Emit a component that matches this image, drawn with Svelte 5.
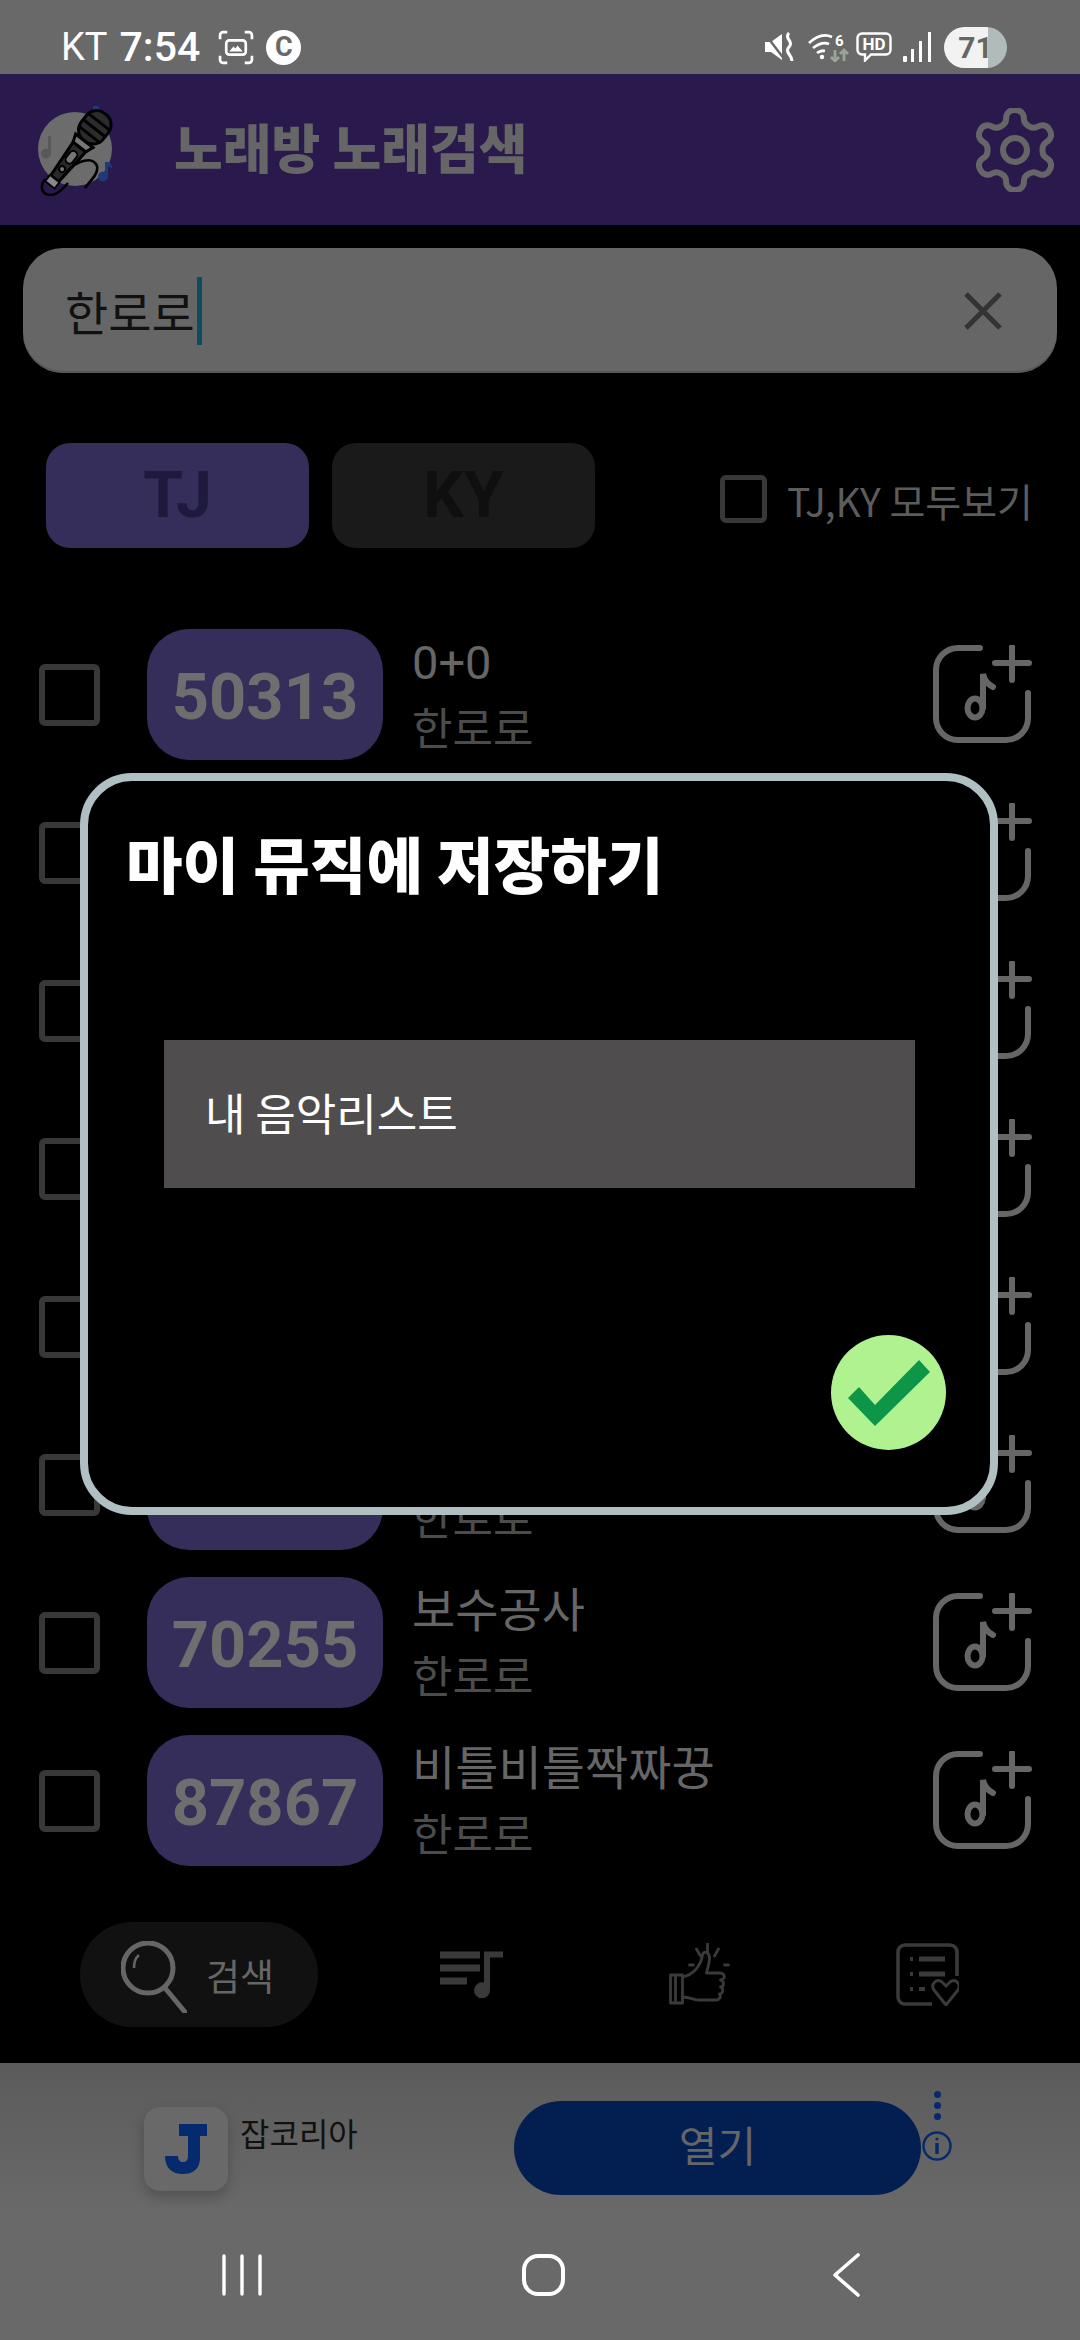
<script lang="ts">
  const rows = [
    { no: "50313", title: "0+0", artist: "한로로" },
    { no: "", title: "", artist: "" },
    { no: "", title: "", artist: "" },
    { no: "", title: "", artist: "" },
    { no: "", title: "", artist: "" },
    { no: "", title: "", artist: "한로로" },
    { no: "70255", title: "보수공사", artist: "한로로" },
    { no: "87867", title: "비틀비틀짝짜꿍", artist: "한로로" },
  ];
</script>

<div class="page">
  <div class="status">
    <span class="carrier">KT</span>
    <span class="clock">7:54</span>
    <svg class="st-shot" viewBox="0 0 35 34" fill="none" stroke="#fff" stroke-width="2.6">
      <path d="M2 9V5a3 3 0 0 1 3-3h4M26 2h4a3 3 0 0 1 3 3v4M33 25v4a3 3 0 0 1-3 3h-4M9 32H5a3 3 0 0 1-3-3v-4" />
      <rect x="8" y="10" width="19" height="14" rx="3" />
      <path d="M11 21l4-5 2 2 2-3 5 6z" fill="#fff" stroke="none" />
    </svg>
    <span class="st-badge">C</span>
    <div class="st-right">
      <svg class="st-mute" viewBox="0 0 30 30" fill="#fff">
        <path d="M0 10h6l11-8v26L6 20H0z" />
        <path d="M0 2l20 26" stroke="#696969" stroke-width="2.5" />
        <path d="M24 1q-3 3 0 7t0 7 0 7 3 7" fill="none" stroke="#fff" stroke-width="3" />
      </svg>
      <svg class="st-wifi" viewBox="0 0 41 30" fill="none" stroke="#fff" stroke-width="2.8">
        <path d="M1 11q12-11 23-6M5 16q9-7 16-4M9 21q4-3 8-2" />
        <circle cx="14" cy="25" r="2.2" fill="#fff" stroke="none" />
        <path d="M27 18v11M23 25l4 4 4-4" stroke="#9aa59a" />
        <path d="M36 29V18M32 22l4-4 4 4" stroke="#9aa59a" />
        <text x="27" y="14" class="wifi-six">6</text>
      </svg>
      <svg class="st-hd" viewBox="0 0 36 30" fill="none" stroke="#fff" stroke-width="2.4">
        <path d="M6 1.5h24a4.5 4.5 0 0 1 4.5 4.5v12a4.5 4.5 0 0 1-4.5 4.5H15l-6 6v-6H6A4.5 4.5 0 0 1 1.5 18V6A4.5 4.5 0 0 1 6 1.5z" />
        <text x="18" y="18" class="hd-text">HD</text>
      </svg>
      <svg class="st-signal" viewBox="0 0 29 30" fill="#fff">
        <rect x="0" y="24" width="4" height="6" rx="1" />
        <rect x="8" y="17" width="3" height="13" />
        <rect x="16" y="9" width="3" height="21" />
        <rect x="25" y="0" width="3" height="30" />
      </svg>
      <div class="st-battery"><span>71</span></div>
    </div>
  </div>

  <header class="topbar">
    <svg class="logo" viewBox="0 0 80 90">
      <circle cx="39" cy="43" r="37" fill="#6c6c6c" />
      <path d="M60 2l3 6-5-3v13a5 5 0 1 1-3-4V2z" fill="#1f3a7a" transform="translate(2 -2)" />
      <path d="M15 30v17a5 5 0 1 1-3-4V30z" fill="#595959" />
      <path d="M74 52l3 7-5-3v10a5 5 0 1 1-3-4V52z" fill="#1f3a7a" transform="translate(0 4)" />
      <g transform="rotate(38 52 30)">
        <rect x="38" y="2" width="28" height="34" rx="13" fill="#2c2c2c" stroke="#000" stroke-width="3" />
        <path d="M39 12h26M38 20h28M39 28h26" stroke="#000" stroke-width="3" />
        <path d="M41 36h22l-3 8H44z" fill="#777" stroke="#000" stroke-width="3" />
        <path d="M44 44h16l-3 40H47z" fill="#2a2a2a" stroke="#000" stroke-width="3" />
        <rect x="48" y="50" width="8" height="14" rx="4" fill="#777" stroke="#000" stroke-width="2" />
        <circle cx="52" cy="72" r="3" fill="#777" stroke="#000" stroke-width="2" />
        <rect x="46" y="84" width="12" height="8" fill="#888" stroke="#000" stroke-width="2" />
      </g>
      <path d="M9 73c-6 8-3 16 6 16 6 0 12-6 17-12M31 66c10-12 26-16 30-6 2 8-8 16-12 22" fill="none" stroke="#000" stroke-width="2.6" />
    </svg>
    <span class="app-title">노래방 노래검색</span>
    <svg class="gear" viewBox="2 2 20 20" fill="none" stroke="#666" stroke-width="1.5" stroke-linecap="round" stroke-linejoin="round">
      <path d="M12.22 2h-.44a2 2 0 0 0-2 2v.18a2 2 0 0 1-1 1.73l-.43.25a2 2 0 0 1-2 0l-.15-.08a2 2 0 0 0-2.73.73l-.22.38a2 2 0 0 0 .73 2.73l.15.1a2 2 0 0 1 1 1.72v.51a2 2 0 0 1-1 1.74l-.15.09a2 2 0 0 0-.73 2.73l.22.38a2 2 0 0 0 2.73.73l.15-.08a2 2 0 0 1 2 0l.43.25a2 2 0 0 1 1 1.73V20a2 2 0 0 0 2 2h.44a2 2 0 0 0 2-2v-.18a2 2 0 0 1 1-1.73l.43-.25a2 2 0 0 1 2 0l.15.08a2 2 0 0 0 2.73-.73l.22-.39a2 2 0 0 0-.73-2.73l-.15-.08a2 2 0 0 1-1-1.74v-.5a2 2 0 0 1 1-1.74l.15-.09a2 2 0 0 0 .73-2.73l-.22-.38a2 2 0 0 0-2.73-.73l-.15.08a2 2 0 0 1-2 0l-.43-.25a2 2 0 0 1-1-1.73V4a2 2 0 0 0-2-2z" />
      <circle cx="12" cy="12" r="3" />
    </svg>
  </header>

  <div class="search">
    <span class="query">한로로</span>
    <span class="caret"></span>
    <svg class="clear" viewBox="0 0 38 38" stroke="#333" stroke-width="5">
      <path d="M2 2l34 34M36 2L2 36" />
    </svg>
  </div>

  <div class="tabs">
    <div class="tab tj">TJ</div>
    <div class="tab ky">KY</div>
    <span class="box small"></span>
    <span class="all-label">TJ,KY 모두보기</span>
  </div>

  <div class="list">
    {#each rows as row}
      <div class="row">
        <span class="box"></span>
        <div class="pill">{row.no}</div>
        <div class="song">
          <div class="song-title">{row.title}</div>
          <div class="song-artist">{row.artist}</div>
        </div>
        <svg class="add" viewBox="0 0 100 100" fill="none" stroke="#666" stroke-width="6" stroke-linecap="round">
          <path d="M48 3H26A22 22 0 0 0 4 25V73A22 22 0 0 0 26 95H74A22 22 0 0 0 96 73V48" />
          <path d="M80 2V35M63 18H97" />
          <ellipse cx="43" cy="63" rx="7.5" ry="9.5" />
          <path d="M51 63V29q2 9 10 13" />
        </svg>
      </div>
    {/each}
  </div>

  <nav class="tabbar">
    <div class="nav-active">
      <svg class="nav-search" viewBox="0 0 66 72" fill="none" stroke="#666" stroke-width="5">
        <circle cx="27" cy="27" r="25" />
        <path d="M44 47l20 24" stroke-linecap="round" />
        <path d="M13 27q0-9 5-13" stroke-width="2.5" />
      </svg>
      <span>검색</span>
    </div>
    <div class="nav-icons">
      <svg viewBox="0 0 63 46" fill="#3a3a3a">
        <rect x="0" y="0" width="40" height="7" />
        <rect x="0" y="13" width="40" height="7" />
        <rect x="0" y="26" width="27" height="7" />
        <path d="M44 0h19v6H50v32a8 8 0 1 1-6-7z" />
      </svg>
      <svg viewBox="0 0 62 63" fill="none" stroke="#3a3a3a" stroke-width="2.8" stroke-linejoin="round">
        <path d="M2 32h12v28H2zM7 32v28" />
        <path d="M14 34c10-2 18-10 20-22 1-5 7-3 7 3 0 6-2 10-3 15h14c5 0 5 7 0 7 4 0 4 7 0 7 3 0 3 7-1 7 2 3 0 6-4 6H30c-6 0-8-3-16-3" />
        <path d="M39 0v9M28 6l4 7M50 6l-4 7M21 22h4M56 22h4" stroke-linecap="round" />
      </svg>
      <svg viewBox="0 0 63 63" fill="none" stroke="#3a3a3a" stroke-width="3.6">
        <path d="M36 61H9a7 7 0 0 1-7-7V9a7 7 0 0 1 7-7h45a7 7 0 0 1 7 7v24" />
        <path d="M14 16h3M14 31h3M14 46h3" stroke-width="4" />
        <path d="M23 16h26M23 31h26" stroke-width="5" />
        <path d="M23 46h6" stroke-width="4" />
        <path d="M50 62L38 47c-4-6 3-12 8-8l4 4 4-4c5-4 12 2 8 8z" stroke-width="3" />
      </svg>
    </div>
  </nav>

  <div class="ad">
    <div class="ad-icon">
      <svg viewBox="0 0 42 50" fill="#062a6e">
        <path d="M14 0h28v12H35v22c0 10-6 16-17 16S0 44 0 32h13c0 4 2 6 5 6s5-2 5-6V12h-9z" />
      </svg>
    </div>
    <span class="ad-name">잡코리아</span>
    <div class="ad-btn">열기</div>
    <div class="ad-side">
      <div class="dots"><i></i><i></i><i></i></div>
      <svg viewBox="0 0 30 30" fill="none" stroke="#062a6e" stroke-width="2.4">
        <circle cx="15" cy="15" r="13.5" />
        <path d="M15 12v11" stroke-width="3.5" />
        <circle cx="15" cy="8" r="1.6" fill="#062a6e" stroke="none" />
      </svg>
    </div>
  </div>

  <div class="sysnav">
    <svg class="sys-recent" viewBox="0 0 40 42" stroke="#fff" stroke-width="3.4" stroke-linecap="round">
      <path d="M2 2v38M20 2v38M38 2v38" />
    </svg>
    <svg class="sys-home" viewBox="0 0 43 42" fill="none" stroke="#fff" stroke-width="4">
      <rect x="2" y="2" width="39" height="38" rx="14" />
    </svg>
    <svg class="sys-back" viewBox="0 0 27 44" fill="none" stroke="#fff" stroke-width="3.6" stroke-linecap="round" stroke-linejoin="round">
      <path d="M25 2L2 22l23 20" />
    </svg>
  </div>

  <div class="dialog">
    <h2>마이 뮤직에 저장하기</h2>
    <div class="playlist">내 음악리스트</div>
    <div class="confirm">
      <svg viewBox="0 0 82 66" fill="#0d9648">
        <path d="M0 38l11-11 16 18L71 0l11 12-55 54z" />
      </svg>
    </div>
  </div>
</div>

<style>
  :global(body) {
    margin: 0;
    background: #000;
  }
  .page {
    position: relative;
    width: 1080px;
    height: 2340px;
    overflow: hidden;
    background: #000;
    color: #666;
    font-family: "Noto Sans CJK KR", Roboto, sans-serif;
    display: flex;
    flex-direction: column;
  }

  .status {
    height: 74px;
    flex: none;
    box-sizing: border-box;
    padding: 20px 73px 0 61px;
    background: #696969;
    color: #fff;
    display: flex;
    align-items: center;
    font-family: Roboto, sans-serif;
    font-size: 38px;
    line-height: 54px;
  }
  .clock {
    margin-left: 12px;
    font-size: 41px;
    font-weight: 500;
  }
  .st-shot {
    width: 36px;
    height: 35px;
    margin-left: 18px;
  }
  .st-badge {
    width: 35px;
    height: 35px;
    margin-left: 12px;
    border-radius: 50%;
    background: #fff;
    color: #696969;
    font-size: 27px;
    font-weight: 700;
    line-height: 35px;
    text-align: center;
  }
  .st-right {
    margin-left: auto;
    display: flex;
    align-items: center;
  }
  .st-mute {
    width: 30px;
    height: 30px;
  }
  .st-wifi {
    width: 41px;
    height: 30px;
    margin-left: 13px;
  }
  .wifi-six {
    font: 700 15px Roboto, sans-serif;
    fill: #fff;
    stroke: none;
  }
  .st-hd {
    width: 36px;
    height: 30px;
    margin-left: 7px;
  }
  .hd-text {
    font: 700 17px Roboto, sans-serif;
    fill: #fff;
    stroke: none;
    text-anchor: middle;
  }
  .st-signal {
    width: 29px;
    height: 30px;
    margin-left: 11px;
  }
  .st-battery {
    width: 63px;
    height: 41px;
    margin-left: 12px;
    border-radius: 21px;
    background: linear-gradient(90deg, #f2f2f2 0 44px, #b0bcbc 44px);
    color: #666;
    font-size: 30px;
    font-weight: 700;
    line-height: 41px;
    text-align: center;
  }

  .topbar {
    height: 151px;
    flex: none;
    background: #29194d;
    display: flex;
    align-items: center;
    padding: 0 25px 0 36px;
  }
  .logo {
    width: 80px;
    height: 90px;
    margin-top: 2px;
  }
  .app-title {
    margin-left: 58px;
    font-size: 53px;
    font-weight: 900;
    line-height: 60px;
    margin-top: -8px;
  }
  .gear {
    width: 80px;
    height: 84px;
    margin-left: auto;
  }

  .search {
    height: 125px;
    flex: none;
    margin: 23px 23px 0;
    padding: 0 55px 0 42px;
    border-radius: 40px;
    background: #666;
    box-shadow: inset 0 -2px 0 #575757;
    display: flex;
    align-items: center;
    color: #111;
  }
  .query {
    font-size: 47px;
    line-height: 60px;
  }
  .caret {
    width: 5px;
    height: 68px;
    margin-left: 2px;
    background: #0d4d5e;
  }
  .clear {
    width: 38px;
    height: 38px;
    margin-left: auto;
  }

  .tabs {
    height: 105px;
    flex: none;
    margin-top: 70px;
    padding: 0 47px 0 46px;
    display: flex;
    align-items: center;
  }
  .tab {
    width: 263px;
    height: 105px;
    border-radius: 24px;
    font-family: Roboto, sans-serif;
    font-size: 64px;
    font-weight: 700;
    line-height: 105px;
    text-align: center;
  }
  .tj {
    background: #352d5a;
    color: #1e1a3e;
  }
  .ky {
    margin-left: 23px;
    background: #1a1a1a;
    color: #0f0f0f;
  }
  .box {
    flex: none;
    width: 61px;
    height: 62px;
    box-sizing: border-box;
    border: 6px solid #383838;
    border-radius: 6px;
  }
  .box.small {
    width: 47px;
    height: 48px;
    margin-left: auto;
    border-width: 5px;
    margin-top: 6px;
  }
  .all-label {
    margin-left: 20px;
    margin-top: 8px;
    font-size: 39px;
    line-height: 48px;
    color: #5c5c5c;
  }

  .list {
    margin-top: 81px;
    padding: 0 48px 0 39px;
    display: flex;
    flex-direction: column;
    gap: 27px;
  }
  .row {
    height: 131px;
    display: flex;
    align-items: center;
  }
  .pill {
    flex: none;
    width: 236px;
    height: 131px;
    margin-left: 47px;
    border-radius: 42px;
    background: #352d5a;
    color: #6e6e6e;
    font-family: Roboto, sans-serif;
    font-size: 65px;
    font-weight: 700;
    line-height: 137px;
    text-align: center;
  }
  .song {
    margin-left: 29px;
  }
  .song-title {
    height: 60px;
    font-family: Roboto, "Noto Sans CJK KR", sans-serif;
    font-size: 47px;
    line-height: 60px;
  }
  .song-artist {
    height: 60px;
    margin-top: 3px;
    font-size: 44px;
    line-height: 60px;
    color: #4c4c4c;
  }
  .add {
    flex: none;
    width: 100px;
    height: 100px;
    margin-left: auto;
  }

  .tabbar {
    height: 105px;
    flex: none;
    margin-top: 56px;
    padding-left: 80px;
    display: flex;
    align-items: center;
  }
  .nav-active {
    width: 238px;
    height: 105px;
    box-sizing: border-box;
    padding-left: 41px;
    border-radius: 52px;
    background: #111;
    display: flex;
    align-items: center;
    gap: 19px;
    font-size: 37px;
  }
  .nav-search {
    width: 66px;
    height: 72px;
    margin-top: 4px;
  }
  .nav-icons {
    margin-left: 122px;
    display: flex;
    align-items: center;
    gap: 165px;
  }
  .nav-icons svg {
    width: 63px;
    height: 63px;
  }

  .ad {
    height: 147px;
    flex: none;
    margin-top: 36px;
    box-sizing: border-box;
    padding: 38px 0 0 144px;
    background: linear-gradient(#5b5b5b, #696969);
    display: flex;
    align-items: flex-start;
  }
  .ad-icon {
    width: 84px;
    height: 84px;
    margin-top: 6px;
    border-radius: 16px;
    background: #696969;
    box-shadow: 0 6px 14px rgba(0, 0, 0, 0.22);
    display: flex;
    align-items: center;
    justify-content: center;
  }
  .ad-icon svg {
    width: 42px;
    height: 50px;
  }
  .ad-name {
    width: 120px;
    margin: 10px 0 0 12px;
    font-size: 32px;
    line-height: 42px;
    color: #111;
    white-space: nowrap;
  }
  .ad-btn {
    width: 407px;
    height: 94px;
    margin-left: 154px;
    border-radius: 47px;
    background: #031f52;
    font-size: 42px;
    line-height: 86px;
    text-align: center;
  }
  .ad-side {
    width: 32px;
    margin: -10px 0 0 0;
    display: flex;
    flex-direction: column;
    align-items: center;
    gap: 11px;
  }
  .ad-side svg {
    width: 30px;
    height: 30px;
  }
  .dots {
    display: flex;
    flex-direction: column;
    gap: 4px;
  }
  .dots i {
    display: block;
    width: 7px;
    height: 7px;
    border-radius: 50%;
    background: #062a6e;
  }

  .sysnav {
    flex: 1;
    background: #696969;
    padding-left: 222px;
    display: flex;
    align-items: center;
  }
  .sys-recent {
    width: 40px;
    height: 42px;
  }
  .sys-home {
    width: 43px;
    height: 42px;
    margin-left: 260px;
  }
  .sys-back {
    width: 27px;
    height: 44px;
    margin-left: 268px;
  }

  .dialog {
    position: absolute;
    left: 80px;
    top: 773px;
    width: 918px;
    height: 742px;
    box-sizing: border-box;
    border: 8px solid #b0bfc2;
    border-radius: 52px;
    background: #000;
    padding: 39px 44px 0 76px;
    display: flex;
    flex-direction: column;
  }
  .dialog h2 {
    margin: 3px 0 -3px -38px;
    font-size: 61.5px;
    font-weight: 900;
    line-height: 80px;
    color: #fff;
  }
  .playlist {
    width: 751px;
    height: 148px;
    margin-top: 140px;
    box-sizing: border-box;
    padding-left: 41px;
    background: #4f4d4e;
    color: #fff;
    font-size: 44px;
    line-height: 144px;
  }
  .confirm {
    width: 115px;
    height: 115px;
    margin-top: 147px;
    align-self: flex-end;
    border-radius: 50%;
    background: #b1f290;
    display: flex;
    align-items: center;
    justify-content: center;
  }
  .confirm svg {
    width: 82px;
    height: 66px;
  }
</style>
